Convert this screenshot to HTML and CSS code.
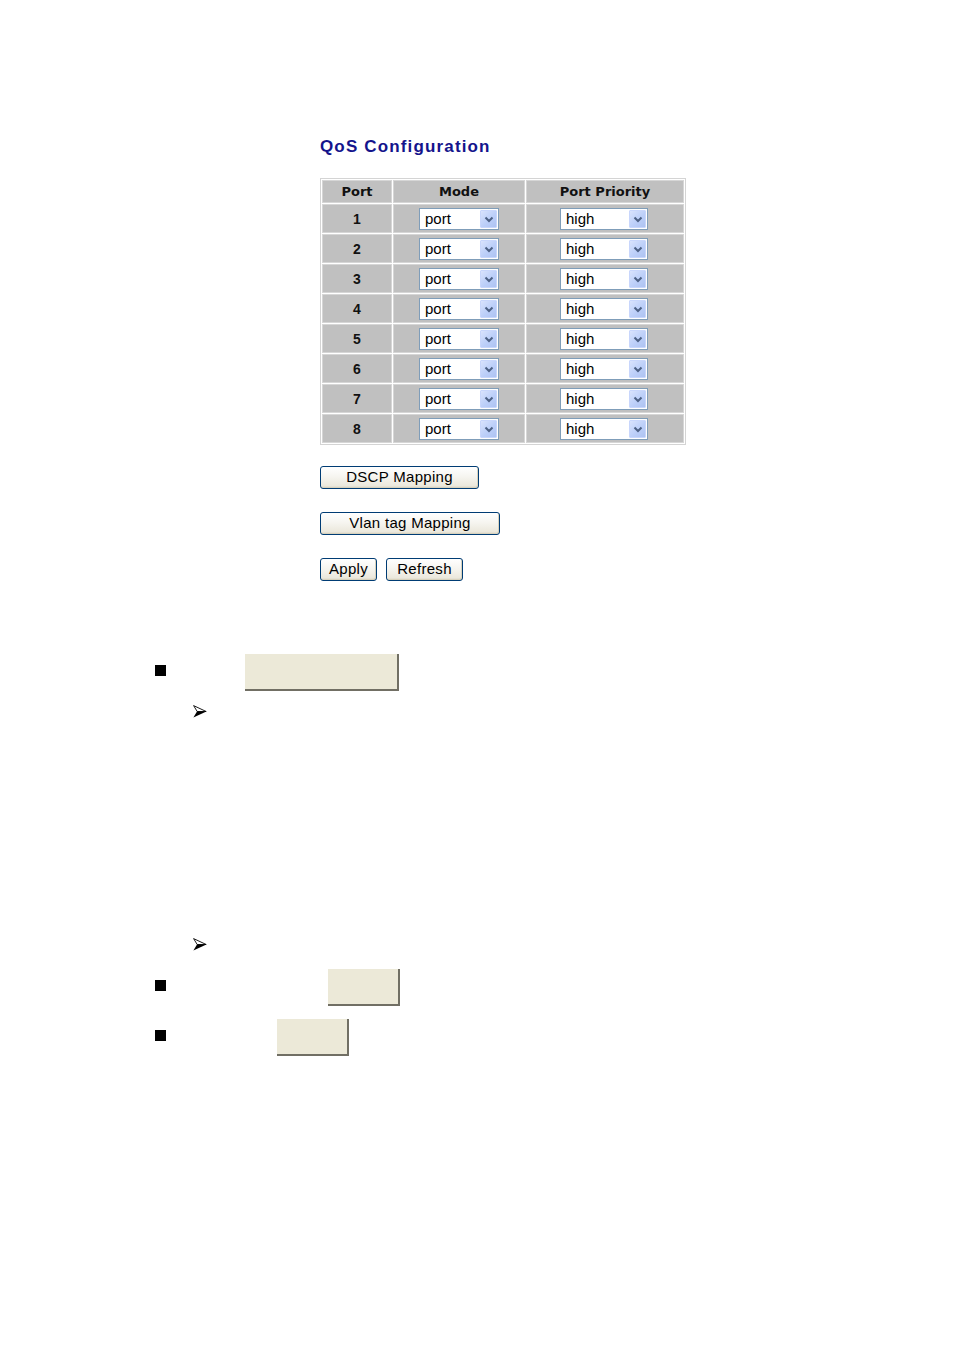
FILE: index.html
```html
<!DOCTYPE html>
<html>
<head>
<meta charset="utf-8">
<title>QoS Configuration</title>
<link rel="stylesheet" href="styles.css">
</head>
<body>
<div class="page">
  <section class="config">
    <h1 class="title">QoS Configuration</h1>
    <table class="qos">
      <colgroup><col class="c-port"><col class="c-mode"><col class="c-prio"></colgroup>
      <thead>
        <tr class="head"><th>Port</th><th>Mode</th><th>Port Priority</th></tr>
      </thead>
      <tbody id="rows"></tbody>
    </table>
    <div class="btnrow first"><button class="btn w-dscp">DSCP Mapping</button></div>
    <div class="btnrow"><button class="btn w-vlan">Vlan tag Mapping</button></div>
    <div class="btnrow pair"><button class="btn w-apply">Apply</button><button class="btn w-refresh">Refresh</button></div>
  </section>

  <section class="notes">
    <div class="item r1"><span class="bullet"></span><span class="shot s1"></span></div>
    <div class="arrow a1"><svg width="14" height="13" viewBox="0 0 14 13"><path d="M0.6 0.6 L13.2 6.5 L4.2 6.5 Z" fill="#fff" stroke="#000" stroke-width="0.9" stroke-linejoin="round"/><path d="M4 6.5 L13.4 6.5 L0.4 12.6 Z" fill="#000"/></svg></div>
    <div class="arrow a2"><svg width="14" height="13" viewBox="0 0 14 13"><path d="M0.6 0.6 L13.2 6.5 L4.2 6.5 Z" fill="#fff" stroke="#000" stroke-width="0.9" stroke-linejoin="round"/><path d="M4 6.5 L13.4 6.5 L0.4 12.6 Z" fill="#000"/></svg></div>
    <div class="item r2"><span class="bullet"></span><span class="shot s2"></span></div>
    <div class="item r3"><span class="bullet"></span><span class="shot s3"></span></div>
  </section>
</div>
<script>
  var tb = document.getElementById('rows');
  var chev = '<svg width="10" height="7" viewBox="0 0 10 7"><path d="M1.5 1.5 L5 5 L8.5 1.5" fill="none" stroke="#4d6185" stroke-width="2"/></svg>';
  for (var i = 1; i <= 8; i++) {
    var tr = document.createElement('tr');
    tr.innerHTML = '<td class="num">' + i + '</td>' +
      '<td><span class="sel sel-mode"><span class="val">port</span><span class="drop">' + chev + '</span></span></td>' +
      '<td><span class="sel sel-prio"><span class="val">high</span><span class="drop">' + chev + '</span></span></td>';
    tb.appendChild(tr);
  }
</script>
</body>
</html>
```

FILE: styles.css
```css
html, body {
  margin: 0;
  padding: 0;
  background: #fff;
}
body {
  font-family: "Liberation Sans", Arial, sans-serif;
  color: #000;
}
.page {
  width: 954px;
  min-height: 1351px;
  display: flex;
  flex-direction: column;
}
.config {
  margin-left: 320px;
  padding-top: 137px;
  display: flex;
  flex-direction: column;
  align-items: flex-start;
}
.title {
  margin: 0;
  font-size: 17px;
  line-height: 20px;
  font-weight: bold;
  letter-spacing: 1.15px;
  color: #14148c;
}
.qos {
  margin-top: 21px;
  width: 366px;
  table-layout: fixed;
  border-collapse: separate;
  border-spacing: 1px;
  background: #ffffff;
  border: 1px solid #d4d4d4;
}
.c-port { width: 70px; }
.c-mode { width: 132px; }
.c-prio { width: 158px; }
.qos th, .qos td {
  background: #c0c0c0;
  border: 1px solid #d6d6d6;
  padding: 0;
  text-align: center;
  vertical-align: middle;
}
.qos th {
  font-family: "DejaVu Sans", Verdana, sans-serif;
  font-weight: bold;
  font-size: 13px;
  color: #111;
}
.qos tr.head { height: 23px; }
.qos tbody tr { height: 29px; }
.qos td.num {
  font-family: "Liberation Sans", Arial, sans-serif;
  font-weight: bold;
  font-size: 14px;
  color: #111;
}
.sel {
  display: inline-flex;
  align-items: stretch;
  box-sizing: border-box;
  height: 22px;
  background: #fff;
  border: 1px solid #7f9db9;
  vertical-align: middle;
  text-align: left;
}
.sel-mode { width: 80px; margin-left: 0; }
.sel-prio { width: 88px; margin-left: -2px; }
.sel .val {
  flex: 1;
  font-size: 15px;
  line-height: 20px;
  padding-left: 5px;
  color: #000;
}
.sel .drop {
  width: 17px;
  margin: 1px;
  box-sizing: border-box;
  border: 1px solid #c8d6fc;
  background: linear-gradient(135deg, #d9e3fd 0%, #bccff9 55%, #aec3f2 100%);
  border-radius: 1px;
  display: flex;
  align-items: center;
  justify-content: center;
  padding-top: 1px;
}
.btnrow {
  display: flex;
  gap: 9px;
  margin-top: 23px;
}
.btnrow.first { margin-top: 21px; }
.btn {
  box-sizing: border-box;
  height: 23px;
  padding: 0 0 1px 0;
  margin: 0;
  border: 1px solid #003c74;
  border-radius: 3px;
  background: linear-gradient(180deg, #ffffff 0%, #f6f5f0 45%, #ebe8dc 90%, #d6d0c0 100%);
  box-shadow: inset -1px -1px 0 #d8d2bd;
  font-family: "Liberation Sans", Arial, sans-serif;
  font-size: 15px;
  letter-spacing: 0.3px;
  color: #000;
  line-height: 20px;
}
.w-dscp { width: 159px; }
.w-vlan { width: 180px; }
.w-apply { width: 57px; }
.w-refresh { width: 77px; }

.notes {
  display: flex;
  flex-direction: column;
  margin-left: 155px;
}
.item {
  display: flex;
  align-items: center;
  height: 36px;
}
.bullet {
  width: 11px;
  height: 11px;
  background: #000;
  margin-top: -3px;
}
.shot {
  box-sizing: border-box;
  height: 37px;
  background: #ece9d8;
  border-right: 2px solid #716f64;
  border-bottom: 2px solid #716f64;
}
.r1 { margin-top: 73px; }
.s1 { width: 154px; margin-left: 79px; }
.arrow {
  height: 13px;
  margin-left: 38px;
  line-height: 0;
}
.a1 { margin-top: 15px; }
.a2 { margin-top: 220px; }
.r2 { margin-top: 18px; }
.s2 { width: 72px; margin-left: 162px; }
.r3 { margin-top: 14px; }
.s3 { width: 72px; margin-left: 111px; }
```
